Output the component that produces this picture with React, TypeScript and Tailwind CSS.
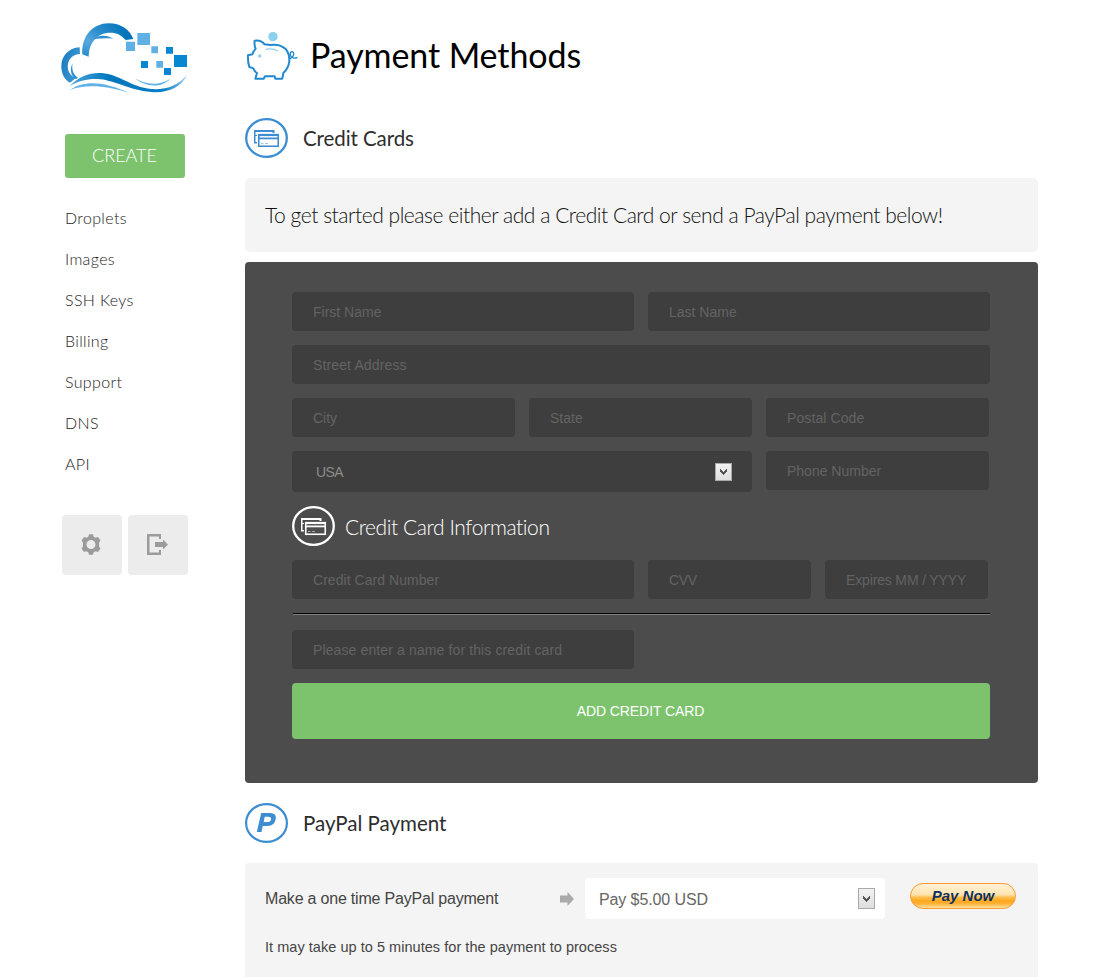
import React from "react";

const museo = "font-['Lato',sans-serif]";

function CloudLogo() {
  return (
    <svg width="150" height="90" viewBox="0 0 450 270" className="block">
      <defs>
        <radialGradient id="arc" gradientUnits="userSpaceOnUse" cx="112" cy="78" r="120">
          <stop offset="0" stopColor="#58aadf" />
          <stop offset="0.35" stopColor="#2c8ecd" />
          <stop offset="1" stopColor="#0073ba" />
        </radialGradient>
        <linearGradient id="lobe" x1="0" y1="0" x2="1" y2="0.5">
          <stop offset="0" stopColor="#1478bd" />
          <stop offset="1" stopColor="#3f99d2" />
        </linearGradient>
        <linearGradient id="wave" x1="0" y1="0" x2="1" y2="0">
          <stop offset="0" stopColor="#4ba3da" />
          <stop offset="0.35" stopColor="#0076bd" />
          <stop offset="0.8" stopColor="#0a7fc6" />
          <stop offset="1" stopColor="#8cc8ec" />
        </linearGradient>
      </defs>
      <path d="M97 118 C94 66 126 25 176 25 C212 25 239 43 250 72 L227 75 C213 57 192 50 169 54 C136 60 116 88 116 125 Z" fill="url(#arc)" />
      <path d="M131 72 C148 58 172 60 190 71 C170 68 151 70 131 72 Z" fill="#2a8fd0" />
      <path d="M89 97 C55 99 34 124 34 153 C34 177 44 195 60 203 L77 190 C58 180 51 165 54 147 C57 130 70 118 90 117 Z" fill="url(#lobe)" />
      <path d="M68 145 C64 164 70 180 84 188 L78 193 C63 184 58 163 68 145 Z" fill="#2a8fd0" />
      <path d="M58 214 C86 184 120 172 155 174 C208 178 242 216 304 222 C350 225 386 211 411 180 C393 218 352 235 304 231 C234 225 190 193 142 192 C112 191 84 198 58 214 Z" fill="url(#wave)" />
      <path d="M60 225 C100 196 160 198 238 234 C169 211 105 207 60 225 Z" fill="#62b3e4" />
      <path d="M255 190 C288 210 328 213 361 191 C332 222 284 215 255 190 Z" fill="#62b3e4" />
      <path d="M228 80h27v28h-27z M262 54h38v36h-38z M304 94h20v21h-20z M319 138h20v20h-20z" fill="#5fb0e4" />
      <path d="M348 96h21v20h-21z M273 138h21v21h-21z M372 120h39v36h-39z M342 159h21v21h-21z" fill="#0787d1" />
    </svg>
  );
}

function PiggyBank() {
  return (
    <svg width="60" height="50" viewBox="10 29 180 150" className="block shrink-0" fill="none">
      <circle cx="100" cy="49" r="14" fill="#8dcfee" />
      <path d="M75 72 Q63 58 45 61 Q43 76 48 85 Q41 93 38 102 L25 105 Q24 124 29 140 L41 144 Q45 154 52 158 L47 175 L72 175 L76 168 L105 168 L107 175 L128 175 L131 158 Q146 145 149 123 Q150 101 139 87 Q121 70 92 74 Z" stroke="#2189cf" strokeWidth="6" strokeLinejoin="round" />
      <path d="M149 116 C170 106 161 88 153 96 C147 107 161 118 173 111" stroke="#2189cf" strokeWidth="4" />
      <path d="M78 87 Q99 83 115 92" stroke="#8dcfee" strokeWidth="4" />
      <circle cx="60" cy="107" r="5" fill="#8dcfee" />
    </svg>
  );
}

function CardsBadge({ light = false }: { light?: boolean }) {
  const c = light ? "#ffffff" : "#3c8dd2";
  const bg = light ? "#4c4c4c" : "#ffffff";
  return (
    <svg width="43" height="40" viewBox="0 0 43 40" className="block shrink-0" fill="none">
      <ellipse cx="21.5" cy="20" rx="20.3" ry="18.8" stroke={c} strokeWidth="2.3" />
      <rect x="9.75" y="12.75" width="18.5" height="12" stroke={c} strokeWidth="1.5" />
      <path d="M9 13h20" stroke={c} strokeWidth="2" />
      <path d="M29 12v4M10 17.5h3" stroke={c} strokeWidth="1" />
      <rect x="12" y="15" width="22" height="14" fill={bg} />
      <rect x="13.75" y="16.75" width="19.5" height="11.5" stroke={c} strokeWidth="1.6" />
      <path d="M13 17h21" stroke={c} strokeWidth="2.2" />
      <path d="M13 20.4h21" stroke={c} strokeWidth="1.8" />
      <path d="M16 25.5h2.5M20 25.5h3" stroke={c} strokeWidth="1" opacity="0.5" />
    </svg>
  );
}

function PayPalBadge() {
  return (
    <svg width="43" height="40" viewBox="0 0 43 40" className="block shrink-0" fill="none">
      <ellipse cx="21.5" cy="20" rx="20.4" ry="18.9" stroke="#3c8dd2" strokeWidth="2.2" />
      <path fillRule="evenodd" d="M16.2 10h9q6.5 0 5.5 6-1.2 7-8 7h-5l-1.2 6h-4.700z M19.700 13.700l-1 5.300h3.800q3.200 0 3.600-2.800.3-2.500-2.500-2.500z" fill="#3c8dd2" />
    </svg>
  );
}

function DropButton({ tall = false }: { tall?: boolean }) {
  return (
    <span className={`flex w-[17px] items-center justify-center border border-[#a9a9a9] bg-linear-to-b from-[#f2f2f2] to-[#dedede] ${tall ? "h-[21px]" : "h-[18px]"}`}>
      <svg width="7" height="6" viewBox="0 0 7 6" className="block">
        <path d="M0 0h1v1h1v1h1v1h1V2h1V1h1V0h1v3H6v1H5v1H4v1H3V5H2V4H1V3H0z" fill="#555" />
      </svg>
    </span>
  );
}

function Field({ label, width }: { label: string; width: string }) {
  return (
    <input
      placeholder={label}
      className={`block h-[39px] shrink-0 rounded-[4px] bg-[#3e3e3e] pr-2 pl-[21px] text-[14px] text-[#999] outline-none placeholder:text-[#636363] placeholder:opacity-100 ${width}`}
    />
  );
}

const links = ["Droplets", "Images", "SSH Keys", "Billing", "Support", "DNS", "API"];

function Sidebar() {
  return (
    <aside className="ml-[50px] w-[195px] shrink-0 pt-[15px]">
      <CloudLogo />
      <button className={`mt-[29px] ml-[15px] block h-11 w-[120px] rounded-[3px] bg-[#7dc36e] pr-px pb-0.5 text-[18px] font-light text-white ${museo}`}>
        CREATE
      </button>
      <nav className={`mt-5 ml-[15px] flex flex-col text-[16px] font-light text-[#222] tracking-[0.35px] ${museo}`}>
        {links.map((l) => (
          <a key={l} href="#" className="h-[41px] leading-[39px]">{l}</a>
        ))}
      </nav>
      <div className="mt-[30px] ml-3 flex gap-1.5">
        <button className="flex size-[60px] items-center justify-center rounded-[4px] bg-[#ececec] pb-px">
          <svg width="20" height="21" viewBox="0 0 20 21" className="-ml-0.5 block" fill="#9b9b9b">
            <path fillRule="evenodd" d="M8 .3h4l.7 2.5 1.8 1 2.5-.8 2.5 3.5-1.4 2.1v3.8l1.4 2.1-2.5 3.5-2.5-.8-1.8 1-.7 2.5H8l-.7-2.5-1.800-1L3 18 .5 14.500l1.400-2.100V8.600L.5 6.500 3 3l2.500.8 1.800-1zM10 6a4.500 4.500 0 1 0 0 9 4.500 4.500 0 0 0 0-9z" />
          </svg>
        </button>
        <button className="flex size-[60px] items-center justify-center rounded-[4px] bg-[#ececec] pb-px">
          <svg width="21" height="21" viewBox="0 0 21 21" className="-ml-0.5 block" fill="#9b9b9b">
            <path d="M0 0h14v5h-2V2.500H2.500v16H12V16h2v5H0z" />
            <path d="M8 8h8V5.500l5 5-5 5V13H8z" />
          </svg>
        </button>
      </div>
    </aside>
  );
}

export default function App() {
  return (
    <div className="flex h-[977px] w-[1116px] overflow-hidden bg-white font-['Liberation_Sans',Arial,sans-serif]">
      <Sidebar />
      <main className="w-[793px] shrink-0 pt-[30px]">
        <header className="flex h-[50px] items-center">
          <div className="-ml-0.5 shrink-0"><PiggyBank /></div>
          <h1 className={`ml-[7px] whitespace-nowrap text-[34px] leading-[50px] tracking-[-0.1px] text-black ${museo}`}>Payment Methods</h1>
        </header>
        <section>
          <div className="mt-[38px] flex h-10 items-center">
            <CardsBadge />
            <h2 className={`ml-[15px] pt-px whitespace-nowrap text-[20.5px] tracking-[-0.08px] text-[#2d2d2d] ${museo}`}>Credit Cards</h2>
          </div>
          <p className={`mt-5 h-[74px] rounded-[5px] bg-[#f4f4f4] pl-5 whitespace-nowrap text-[21px] leading-[74px] font-light tracking-[-0.46px] text-[#111] ${museo}`}>
            To get started please either add a Credit Card or send a PayPal payment below!
          </p>
          <form className="mt-2.5 flex h-[521px] flex-col gap-3.5 rounded-[4px] bg-[#4c4c4c] px-[47px] pt-[30px]">
            <div className="flex gap-3.5">
              <Field label="First Name" width="w-[342px]" />
              <Field label="Last Name" width="w-[342px]" />
            </div>
            <Field label="Street Address" width="w-[698px] tracking-[0.13px]" />
            <div className="flex gap-3.5">
              <Field label="City" width="w-[223px]" />
              <Field label="State" width="w-[223px]" />
              <Field label="Postal Code" width="w-[223px] tracking-[0.1px]" />
            </div>
            <div className="flex gap-3.5">
              <div className="flex h-[41px] w-[460px] items-center justify-between rounded-[4px] bg-[#3e3e3e] pr-5 pl-6 text-[14px] text-[#8c8c8c]">
                <span className="pt-0.5 tracking-[-0.6px]">USA</span>
                <DropButton />
              </div>
              <Field label="Phone Number" width="w-[223px]" />
            </div>
            <div className="flex h-10 items-center">
              <CardsBadge light />
              <h3 className={`ml-2.5 pt-px whitespace-nowrap text-[21px] font-light tracking-[-0.42px] text-white ${museo}`}>Credit Card Information</h3>
            </div>
            <div className="flex gap-3.5">
              <Field label="Credit Card Number" width="w-[342px] tracking-[0.05px]" />
              <Field label="CVV" width="w-[163px] tracking-[-0.3px]" />
              <Field label="Expires MM / YYYY" width="w-[163px] tracking-[-0.15px]" />
            </div>
            <hr className="mr-px mb-px ml-px h-0.5 border-t border-b border-t-black border-b-[#808080]" />
            <Field label="Please enter a name for this credit card" width="w-[342px] tracking-[0.12px]" />
            <button type="button" className="h-14 w-[698px] rounded-[4px] bg-[#7dc36e] pr-px text-[14px] tracking-[-0.08px] text-white">ADD CREDIT CARD</button>
          </form>
        </section>
        <section>
          <div className="mt-5 flex h-10 items-center">
            <PayPalBadge />
            <h2 className={`ml-[15px] pt-px whitespace-nowrap text-[20.5px] text-[#2d2d2d] ${museo}`}>PayPal Payment</h2>
          </div>
          <div className="mt-5 h-[140px] rounded-[4px] bg-[#f4f4f4] px-5 pt-[15px]">
            <div className="flex h-[41px] items-center text-[16px]">
              <span className="w-[295px] shrink-0 whitespace-nowrap tracking-[-0.2px] text-[#444]">Make a one time PayPal payment</span>
              <svg width="14" height="14" viewBox="0 0 14 14" className="block shrink-0">
                <path d="M0 3.500h7.500V0L14 7l-6.500 7v-3.500H0z" fill="#aaa" />
              </svg>
              <div className="ml-[11px] flex h-[41px] w-[300px] shrink-0 items-center justify-between rounded-[4px] bg-white pr-2.5 pl-3.5 text-[#666]">
                <span className="pt-0.5 tracking-[-0.1px]">Pay $5.00 USD</span>
                <DropButton tall />
              </div>
              <button className="-mt-[5px] ml-[25px] h-[26px] w-[106px] shrink-0 rounded-full border border-[#ff9933] bg-[linear-gradient(#fff2d8_0%,#ffe3ad_45%,#ffc04d_55%,#ffa822_70%,#ffad2e_80%,#ffe29e_100%)] text-[15px] leading-[22px] font-bold text-[#0b3163] italic">
                Pay Now
              </button>
            </div>
            <p className="mt-[18px] text-[14.5px] leading-5 tracking-[0.04px] text-[#444]">It may take up to 5 minutes for the payment to process</p>
          </div>
        </section>
      </main>
    </div>
  );
}
